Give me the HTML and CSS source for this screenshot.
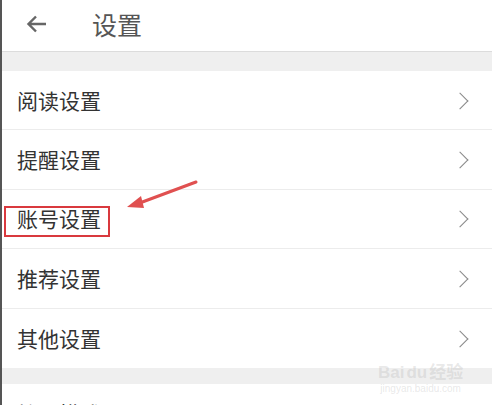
FILE: index.html
```html
<!DOCTYPE html>
<html lang="zh-CN">
<head>
    <meta charset="UTF-8">
    <meta name="viewport" content="width=device-width, initial-scale=1.0">
    <title>设置</title>
    <link rel="stylesheet" href="styles.css">
</head>
<body>
    <div class="screen">
        <div class="header">
            <svg class="back" width="22" height="20" viewBox="0 0 22 20">
                <path d="M20 10H3M10 2.5L2.5 10L10 17.5" fill="none" stroke="#666" stroke-width="2.4"/>
            </svg>
            <div class="title">设置</div>
        </div>
        <div class="gap"></div>
        <div class="list">
            <div class="row"><span class="label">阅读设置</span><span class="chevron"></span></div>
            <div class="row"><span class="label">提醒设置</span><span class="chevron"></span></div>
            <div class="row"><span class="label">账号设置</span><span class="chevron"></span></div>
            <div class="row"><span class="label">推荐设置</span><span class="chevron"></span></div>
            <div class="row"><span class="label">其他设置</span><span class="chevron"></span></div>
        </div>
        <div class="gap small"></div>
        <div class="list">
            <div class="row"><span class="label">护眼模式</span><span class="toggle"></span></div>
        </div>

        <!-- annotation overlay -->
        <div class="mark-box"></div>
        <svg class="mark-arrow" width="80" height="34" viewBox="0 0 80 34">
            <path d="M73 3L14 25" stroke="#e05050" stroke-width="3" stroke-linecap="round"/>
            <path d="M4 28L18 17L21 29Z" fill="#e05050"/>
        </svg>
        <div class="watermark">
            <div class="wm-big">Bai<span class="wm-du">du</span>经验</div>
            <div class="wm-small">jingyan.baidu.com</div>
        </div>
    </div>
</body>
</html>
```

FILE: styles.css
```css
body {
    margin: 0;
    padding: 0;
    background: #fff;
    font-family: "Noto Sans CJK SC", "Noto Sans", sans-serif;
    color: #333;
    overflow: hidden;
}
.screen {
    position: relative;
    width: 490px;
    height: 405px;
    border-left: 2px solid #555;
    overflow: hidden;
}
.header {
    display: flex;
    align-items: center;
    border-bottom: 1px solid #dcdcdc;
    box-sizing: border-box;
    height: 52px;
    padding-bottom: 3px;
}
.back {
    margin-left: 24px;
}
.title {
    margin-left: 44px;
    font-size: 25px;
    color: #555;
    line-height: 1;
}
.gap {
    height: 19px;
    background: #efefef;
}
.gap.small {
    height: 16px;
}
.row {
    height: 59.4px;
    box-sizing: border-box;
    display: flex;
    align-items: center;
    justify-content: space-between;
    padding: 0 24px 0 15px;
    border-bottom: 1px solid #ececec;
}
.row:last-child {
    border-bottom: none;
}
.label {
    font-size: 21px;
    line-height: 1;
    color: #333;
}
.chevron {
    width: 11px;
    height: 11px;
    border-top: 1.5px solid #888;
    border-right: 1.5px solid #888;
    transform: rotate(45deg);
    margin-right: 2px;
    margin-top: 1px;
}
.toggle {
    width: 48px;
    height: 22px;
    border-radius: 11px;
    background: #e6e6e6;
    margin-top: 26px;
}
.mark-box {
    position: absolute;
    left: 2px;
    top: 206px;
    width: 102px;
    height: 27px;
    border: 2.5px solid #d9393e;
}
.mark-arrow {
    position: absolute;
    left: 121px;
    top: 179px;
}
.watermark {
    position: absolute;
    left: 376px;
    top: 358px;
    color: rgba(180, 180, 180, 0.3);
    text-align: center;
    font-family: "Liberation Sans", "Noto Sans CJK SC", sans-serif;
}
.wm-big {
    font-size: 17px;
    font-weight: bold;
}
.wm-du {
    margin: 0 2px;
}
.wm-small {
    font-size: 10px;
}
```
